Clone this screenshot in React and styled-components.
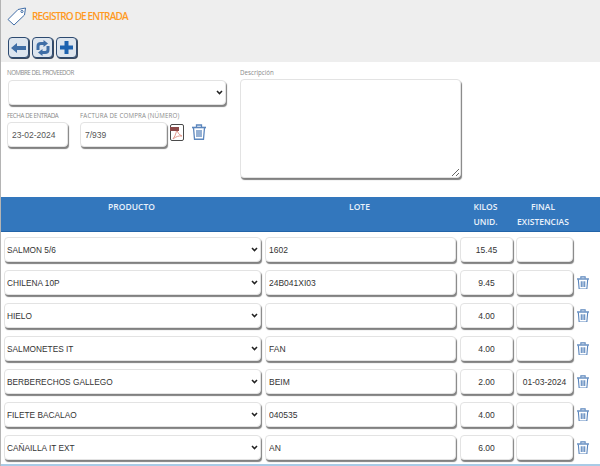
import styled, { createGlobalStyle } from "styled-components";

const chevron = encodeURIComponent(
  '<svg xmlns="http://www.w3.org/2000/svg" width="7" height="5" viewBox="0 0 7 5"><path d="M1 1 L3.5 3.6 L6 1" fill="none" stroke="#222" stroke-width="1.5"/></svg>'
);

const GlobalStyle = createGlobalStyle`
  html, body {
    margin: 0;
    padding: 0;
    background: #fff;
    overflow: hidden;
    font-family: "Open Sans", "Liberation Sans", sans-serif;
  }
`;

const Page = styled.div`
  width: 600px;
  height: 466px;
  box-sizing: border-box;
  border-left: 1px solid #b4b4b4;
  overflow: hidden;
  background: #fff;
`;

const Header = styled.header`
  height: 62px;
  box-sizing: border-box;
  background: #eeeeee;
  padding: 5px 0 0 6px;
`;

const TitleRow = styled.div`
  display: flex;
  align-items: center;
  gap: 5px;
  height: 22px;
`;

const Title = styled.h1`
  margin: 0;
  font-size: 10px;
  font-weight: 600;
  letter-spacing: -0.85px;
  color: #ff9a1f;
`;

const Toolbar = styled.div`
  display: flex;
  gap: 3px;
  margin: 10px 0 0 1px;
`;

const ToolButton = styled.button`
  width: 21px;
  height: 21px;
  padding: 0;
  display: flex;
  align-items: center;
  justify-content: center;
  background: #dde5ee;
  border: 1px solid #2d4a70;
  border-radius: 4px;
  box-shadow: 1px 1px 0 #3a4a60;
`;

const Form = styled.section`
  display: flex;
  gap: 13px;
  height: 135px;
  box-sizing: border-box;
  padding: 6px 0 0 6px;
`;

const LeftColumn = styled.div`
  width: 220px;
`;

const Label = styled.label`
  display: block;
  font-size: 6.2px;
  line-height: 9px;
  letter-spacing: ${(p) => p.$tracking || 0}px;
  color: #8a8a8a;
  white-space: nowrap;
`;

const fieldLook = `
  box-sizing: border-box;
  background: #fff;
  border: 1px solid #e3e3e3;
  border-radius: 4px;
  box-shadow: 1px 2px 1px #808080;
  outline: none;
  color: #444;
`;

const selectLook = `
  appearance: none;
  background: #fff url("data:image/svg+xml,${chevron}") no-repeat right 2px center;
`;

const ProviderSelect = styled.select`
  ${fieldLook}
  ${selectLook}
  display: block;
  width: 218px;
  height: 25px;
  margin: 3px 0 0 1px;
`;

const DateRow = styled.div`
  display: flex;
  margin-top: 6px;
`;

const DateField = styled.div`
  width: ${(p) => p.$width}px;
`;

const TextInput = styled.input`
  ${fieldLook}
  display: block;
  width: ${(p) => p.$width}px;
  height: 25px;
  margin-top: 2px;
  padding: 0 4px;
  color: #555;
  font-family: "Liberation Sans", sans-serif;
  font-size: 8.5px;
`;

const FileIcons = styled.div`
  display: flex;
  align-items: flex-start;
  gap: 8px;
  margin-top: 13px;
`;

const DescriptionField = styled.div`
  width: 222px;
`;

const Description = styled.textarea`
  ${fieldLook}
  display: block;
  width: 221px;
  height: 99px;
  margin-top: 2px;
  padding: 4px;
`;

const TableHead = styled.div`
  display: grid;
  grid-template-columns: 259px 197px 55px 60px;
  height: 35px;
  box-sizing: border-box;
  background: #3377bd;
  border-bottom: 1px solid #2264a8;
  color: #eaf2fb;
  font-size: 8.5px;
  font-weight: 600;
  line-height: 14.5px;
  text-align: center;
  padding: 3px 0 0 1px;
`;

const Rows = styled.div`
  display: flex;
  flex-direction: column;
  gap: 8px;
  padding: 5px 0 0 3px;
`;

const Row = styled.div`
  display: flex;
  align-items: center;
  height: 25px;
`;

const ProductSelect = styled.select`
  ${fieldLook}
  ${selectLook}
  width: 257px;
  height: 25px;
  margin-right: 4px;
  padding: 0 0 0 2px;
  color: #333;
  font-family: "Liberation Sans", sans-serif;
  font-size: 8.3px;
`;

const RowInput = styled.input`
  ${fieldLook}
  width: ${(p) => p.$width}px;
  height: 25px;
  margin-right: ${(p) => p.$gap}px;
  padding: 0 3px;
  color: #333;
  font-family: "Liberation Sans", sans-serif;
  font-size: 8.5px;
  text-align: ${(p) => (p.$center ? "center" : "left")};
`;

const Footer = styled.div`
  height: 3px;
  margin-top: 4px;
  background: #a9cbe6;
`;

const TagIcon = () => (
  <svg width="20" height="19" viewBox="0 0 20 19" fill="none" stroke="#3f6ca6" strokeWidth="1">
    <path d="M1 12.5 L11 2.5 L18.5 1 L17.5 8 L7 18 Z" fill="#fff" />
    <circle cx="15" cy="4.5" r="1.1" />
  </svg>
);

const BackIcon = () => (
  <svg width="15" height="12" viewBox="0 0 15 12">
    <path d="M0 6 L6 1 V4 H15 V8 H6 V11 Z" fill="#3f6ea6" />
  </svg>
);

const RefreshIcon = () => (
  <svg width="16" height="16" viewBox="0 0 16 16" fill="none" stroke="#3f6ea6" strokeWidth="3">
    <path d="M3 10 V6 Q3 3.5 6 3.5 H9" />
    <path d="M13 6 V10 Q13 12.5 10 12.5 H7" />
    <path d="M8.5 0 L13 3.5 L8.5 7 Z" fill="#3f6ea6" stroke="none" />
    <path d="M7.5 9 L3 12.5 L7.5 16 Z" fill="#3f6ea6" stroke="none" />
  </svg>
);

const PlusIcon = () => (
  <svg width="13" height="13" viewBox="0 0 13 13">
    <path d="M4.5 0 H8.5 V4.5 H13 V8.5 H8.5 V13 H4.5 V8.5 H0 V4.5 H4.5 Z" fill="#1c62b0" />
  </svg>
);

const PdfIcon = () => (
  <svg width="14" height="17" viewBox="0 0 14 17" fill="none">
    <rect x="0.5" y="0.5" width="13" height="16" rx="1.5" fill="#fff" stroke="#4a4a4a" />
    <path d="M3 15 C6 11 7 6 6.5 4 C7 8 9 11 12 12 C9 11.5 6 12.5 3 15 Z" stroke="#e59a8e" />
    <rect x="0" y="3" width="9" height="4" fill="#8c4a4a" />
  </svg>
);

const TrashIcon = ({ size = 14 }) => (
  <svg width={size} height={size * 1.14} viewBox="0 0 14 16" fill="none" stroke="#5b86bd" strokeWidth="1.3">
    <path d="M0 3.5 H14" strokeWidth="1.6" />
    <path d="M4.5 3 V1 H9.5 V3" />
    <path d="M1.5 4 L2.5 15.3 H11.5 L12.5 4" />
    <path d="M5 6 V13 M7 6 V13 M9 6 V13" />
  </svg>
);

const rows = [
  { product: "SALMON 5/6", lot: "1602", kilos: "15.45", final: "", trash: false },
  { product: "CHILENA 10P", lot: "24B041XI03", kilos: "9.45", final: "", trash: true },
  { product: "HIELO", lot: "", kilos: "4.00", final: "", trash: true },
  { product: "SALMONETES IT", lot: "FAN", kilos: "4.00", final: "", trash: true },
  { product: "BERBERECHOS GALLEGO", lot: "BEIM", kilos: "2.00", final: "01-03-2024", trash: true },
  { product: "FILETE BACALAO", lot: "040535", kilos: "4.00", final: "", trash: true },
  { product: "CAÑAILLA IT EXT", lot: "AN", kilos: "6.00", final: "", trash: true },
];

const App = () => {
  return (
    <Page>
      <GlobalStyle />
      <Header>
        <TitleRow>
          <TagIcon />
          <Title>REGISTRO DE ENTRADA</Title>
        </TitleRow>
        <Toolbar>
          <ToolButton><BackIcon /></ToolButton>
          <ToolButton><RefreshIcon /></ToolButton>
          <ToolButton><PlusIcon /></ToolButton>
        </Toolbar>
      </Header>

      <Form>
        <LeftColumn>
          <Label $tracking={-0.5}>NOMBRE DEL PROVEEDOR</Label>
          <ProviderSelect />
          <DateRow>
            <DateField $width={73}>
              <Label $tracking={-0.4}>FECHA DE ENTRADA</Label>
              <TextInput $width={61} defaultValue="23-02-2024" />
            </DateField>
            <DateField $width={90}>
              <Label $tracking={0.15}>FACTURA DE COMPRA (NÚMERO)</Label>
              <TextInput $width={87} defaultValue="7/939" />
            </DateField>
            <FileIcons>
              <PdfIcon />
              <TrashIcon />
            </FileIcons>
          </DateRow>
        </LeftColumn>
        <DescriptionField>
          <Label>Descripción</Label>
          <Description />
        </DescriptionField>
      </Form>

      <TableHead>
        <div>PRODUCTO</div>
        <div>LOTE</div>
        <div>KILOS<br />UNID.</div>
        <div>FINAL<br />EXISTENCIAS</div>
      </TableHead>

      <Rows>
        {rows.map((row) => (
          <Row key={row.product}>
            <ProductSelect defaultValue={row.product}>
              <option>{row.product}</option>
            </ProductSelect>
            <RowInput $width={191} $gap={4} defaultValue={row.lot} />
            <RowInput $width={53} $gap={3} $center defaultValue={row.kilos} />
            <RowInput $width={57} $gap={4} $center defaultValue={row.final} />
            {row.trash && <TrashIcon size={12} />}
          </Row>
        ))}
      </Rows>
      <Footer />
    </Page>
  );
};

export default App;
